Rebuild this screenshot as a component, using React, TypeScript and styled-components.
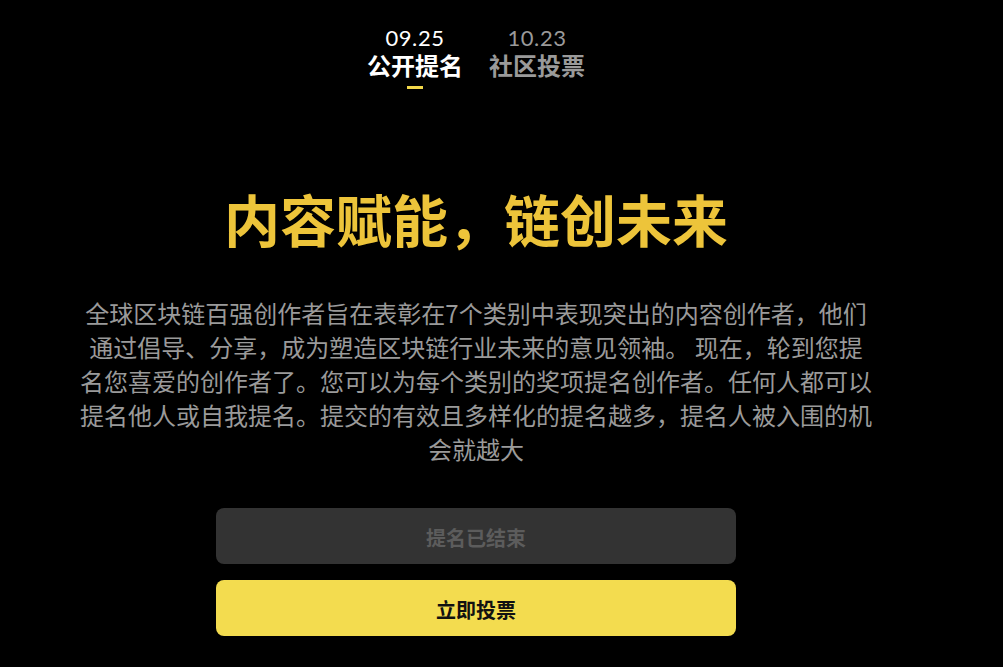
import React from "react"
import styled, { createGlobalStyle } from "styled-components"

const GlobalStyle = createGlobalStyle`
  html, body {
    margin: 0;
    padding: 0;
    background: #000;
  }
  body {
    font-family: "Noto Sans CJK SC", "Noto Sans", sans-serif;
  }
`

const Page = styled.div`
  width: 952px;
  min-height: 667px;
  display: flex;
  flex-direction: column;
  align-items: center;
  background: #000;
`

const Tabs = styled.div`
  display: flex;
  gap: 26px;
  padding-top: 27px;
`

const Tab = styled.div<{ $active?: boolean }>`
  display: flex;
  flex-direction: column;
  align-items: center;
  color: ${(p) => (p.$active ? "#ffffff" : "#9a9a9a")};
`

const TabDate = styled.div`
  font-family: "Lato", "Noto Sans", sans-serif;
  font-size: 22px;
  line-height: 22px;
  letter-spacing: 0.6px;
`

const TabLabel = styled.div`
  margin-top: 2px;
  font-size: 24px;
  font-weight: 700;
  line-height: 28px;
`

const Underline = styled.div<{ $active?: boolean }>`
  width: 16px;
  height: 3px;
  margin-top: 7px;
  background: ${(p) => (p.$active ? "#f3d84a" : "transparent")};
`

const Title = styled.h1`
  margin: 93px 0 0;
  font-size: 56px;
  font-weight: 700;
  line-height: 72px;
  color: #edc43a;
`

const Intro = styled.p`
  width: 793px;
  margin: 42px 0 0;
  font-size: 24px;
  line-height: 34px;
  color: #9a9a9a;
  text-align: center;
`

const Buttons = styled.div`
  display: flex;
  flex-direction: column;
  gap: 16px;
  margin-top: 42px;
`

const Button = styled.button<{ $primary?: boolean }>`
  width: 520px;
  height: 56px;
  padding: 2px 0 0;
  border: none;
  border-radius: 8px;
  font-family: "Noto Sans CJK SC", sans-serif;
  font-size: 20px;
  font-weight: 700;
  background: ${(p) => (p.$primary ? "#f3dc4f" : "#333333")};
  color: ${(p) => (p.$primary ? "#111111" : "#5c5c5c")};
  cursor: ${(p) => (p.$primary ? "pointer" : "default")};
`

const App: React.FC = () => {
  const tabs = [
    { date: "09.25", label: "公开提名", active: true },
    { date: "10.23", label: "社区投票", active: false },
  ]

  return (
    <>
      <GlobalStyle />
      <Page>
        <Tabs>
          {tabs.map((t) => (
            <Tab key={t.date} $active={t.active}>
              <TabDate>{t.date}</TabDate>
              <TabLabel>{t.label}</TabLabel>
              <Underline $active={t.active} />
            </Tab>
          ))}
        </Tabs>
        <Title>内容赋能，链创未来</Title>
        <Intro>
          全球区块链百强创作者旨在表彰在7个类别中表现突出的内容创作者，他们通过倡导、分享，成为塑造区块链行业未来的意见领袖。 现在，轮到您提名您喜爱的创作者了。您可以为每个类别的奖项提名创作者。任何人都可以提名他人或自我提名。提交的有效且多样化的提名越多，提名人被入围的机会就越大
        </Intro>
        <Buttons>
          <Button disabled>提名已结束</Button>
          <Button $primary>立即投票</Button>
        </Buttons>
      </Page>
    </>
  )
}

export default App
